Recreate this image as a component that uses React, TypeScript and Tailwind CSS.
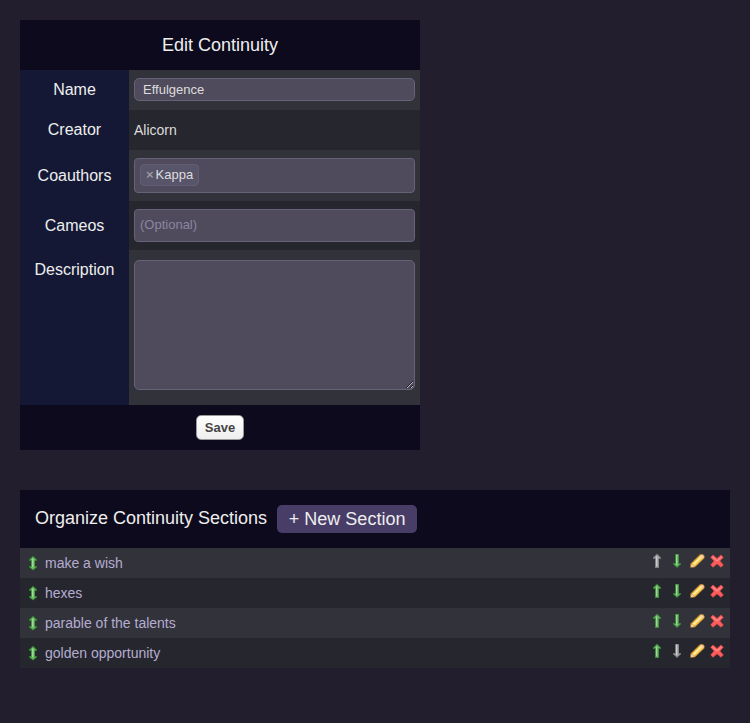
import React from 'react';

type Tone = 'green' | 'gray';

const TONES = {
  green: { edge: '#3b8f3a', body: '#6cbc64', light: '#9bd993' },
  gray: { edge: '#858585', body: '#aaaaaa', light: '#cccccc' },
};

function Arrow({ tone, down = false }: { tone: Tone; down?: boolean }) {
  const c = TONES[tone];
  return (
    <svg width="16" height="16" viewBox="0 0 16 16" className="block shrink-0">
      {down ? (
        <>
          <path d="M6 1h4v9h2v1.200L8 15L4 11.200V10h2z" fill={c.edge} fillOpacity=".85" />
          <path d="M7 1.500h2.300V11h1.500L8 13.800L5.200 11H7z" fill={c.body} />
          <path d="M7 2h1v10H7z" fill={c.light} />
        </>
      ) : (
        <>
          <path d="M8 .6l4 4V6h-2v9H6V6H4V4.600z" fill={c.edge} fillOpacity=".85" />
          <path d="M8 1.800l3 3.200H9.300v9.300H6.800V5H5z" fill={c.body} />
          <path d="M7 3.500h1V13H7z" fill={c.light} />
        </>
      )}
    </svg>
  );
}

function SortArrow() {
  return (
    <svg width="16" height="16" viewBox="0 0 16 16" className="mb-px block shrink-0">
      <path d="M8 .8L12 4.500V6h-2v5h2v1.300L8 15.500L4 12.300V11h2V6H4V4.500z" fill="#368b35" fillOpacity=".9" />
      <path d="M8 2l3 3H9.400v7H11l-3 2.400L5 12h1.600V5H5z" fill="#67bd60" />
      <path d="M7 3.500h1.500V12H7z" fill="#9bdb91" />
    </svg>
  );
}

function Pencil() {
  return (
    <svg width="16" height="16" viewBox="0 0 16 16" className="block shrink-0">
      <path d="M1 14.900L1.600 10.500L10.700 1.600L12.500 1L14.500 1.500L15.700 3.500L15.200 5.500L6 14.200z" fill="#c98b35" />
      <path d="M2.800 10.700L10.900 2.700L14 5.500L5.900 13.300z" fill="#f8ce50" />
      <path d="M3.900 10.900L11.500 3.500L12.700 4.600L5 12.100z" fill="#fff3ae" />
      <path d="M10.800 2.700L12.500 1.900L14.200 2.400L14.900 3.800L14 5.500z" fill="#f7d6b5" />
      <path d="M1.900 14L2.600 11.100L5.500 13.500z" fill="#f7dfbf" />
      <path d="M1 14.900l.4-2l1.600 1.600z" fill="#785126" />
    </svg>
  );
}

function Cross() {
  return (
    <svg width="16" height="16" viewBox="0 0 16 16" className="block shrink-0">
      <path d="M4 2L8 5.500L12 2L14.300 4.300L10.900 8L14.300 12L12 14.300L8 10.800L4 14.300L1.700 12L5.100 8L1.700 4.300z" fill="#ff5b5b" stroke="#e94b4b" strokeWidth=".6" />
      <path d="M3.500 4L8 7.800L12.500 4" fill="none" stroke="#ff8b88" strokeWidth="1.300" />
    </svg>
  );
}

function Row({ label, height, dark = false, top = false, children }: {
  label: string; height: string; dark?: boolean; top?: boolean; children: React.ReactNode;
}) {
  return (
    <div className={`flex ${height}`}>
      <div className={`flex w-[109px] shrink-0 justify-center bg-[#141834] text-[16px] leading-5 text-[#eeeeee] ${top ? 'items-start pt-[10px]' : 'items-center'}`}>
        {label}
      </div>
      <div className={`flex flex-1 px-[5px] ${top ? 'items-start pt-[10px]' : 'items-center'} ${dark ? 'bg-[#26262e]' : 'bg-[#32323b]'}`}>
        {children}
      </div>
    </div>
  );
}

const sections = ['make a wish', 'hexes', 'parable of the talents', 'golden opportunity'];

export default function App() {
  return (
    <main className="min-h-[723px] bg-[#221e2e] p-5 font-['Liberation_Sans',Arial,sans-serif]">
      <form className="w-[400px]" onSubmit={(e) => e.preventDefault()}>
        <h1 className="flex h-[50px] items-center justify-center bg-[#0c0a1c] text-[18px] text-[#eeeeee]">Edit Continuity</h1>
        <Row label="Name" height="h-10">
          <input defaultValue="Effulgence" className="mb-px h-[23px] w-full rounded-[5px] border border-[#66627a] bg-[#4f4b5c] px-2 text-[13px] text-[#dddddd] outline-none" />
        </Row>
        <Row label="Creator" height="h-10" dark>
          <span className="text-[14px] text-[#dddddd]">Alicorn</span>
        </Row>
        <Row label="Coauthors" height="h-[51px]">
          <div className="flex h-[35px] w-full items-center rounded-[4px] border border-[#66627a] bg-[#4f4b5c] pb-px pl-[5px]">
            <div className="flex h-[22px] items-center rounded-[4px] border border-[#625e73] bg-[#58546a] px-[5px] pb-px text-[13px] leading-5 text-[#dddddd]">
              <span className="mr-[2px] font-bold text-[#999999]">×</span>
              <span>Kappa</span>
            </div>
          </div>
        </Row>
        <Row label="Cameos" height="h-[49px]" dark>
          <div className="flex h-[33px] w-full items-center rounded-[4px] border border-[#66627a] bg-[#4f4b5c] px-[5px] pb-px text-[13px] text-[#8b86a0]">(Optional)</div>
        </Row>
        <Row label="Description" height="h-[155px]" top>
          <textarea className="block h-[130px] w-full resize rounded-[5px] border border-[#66627a] bg-[#4f4b5c] outline-none" />
        </Row>
        <div className="flex h-[45px] items-center justify-center bg-[#0c0a1c]">
          <button className="h-[25px] w-12 rounded-[5px] border border-[#999999] bg-linear-to-b from-white to-[#eeeeee] text-[13px] font-bold text-[#444444]">Save</button>
        </div>
      </form>

      <section className="mt-10">
        <header className="flex h-[58px] items-center bg-[#0c0a1c] pl-[15px] text-[18px] text-[#eeeeee]">
          <h2 className="mb-[2px]">Organize Continuity Sections</h2>
          <button className="ml-[10px] h-7 w-[140px] rounded-[5px] bg-[#483d67] whitespace-nowrap">+ New Section</button>
        </header>
        <ul>
          {sections.map((name, i) => (
            <li key={name} className={`flex h-[30px] items-center pr-[5px] pl-[5px] ${i % 2 ? 'bg-[#26262e]' : 'bg-[#32323b]'}`}>
              <SortArrow />
              <a className="ml-1 flex-1 text-[14px] text-[#b5add0]">{name}</a>
              <div className="mb-1 flex gap-1">
                <Arrow tone={i === 0 ? 'gray' : 'green'} />
                <Arrow tone={i === sections.length - 1 ? 'gray' : 'green'} down />
                <Pencil />
                <Cross />
              </div>
            </li>
          ))}
        </ul>
      </section>
    </main>
  );
}
